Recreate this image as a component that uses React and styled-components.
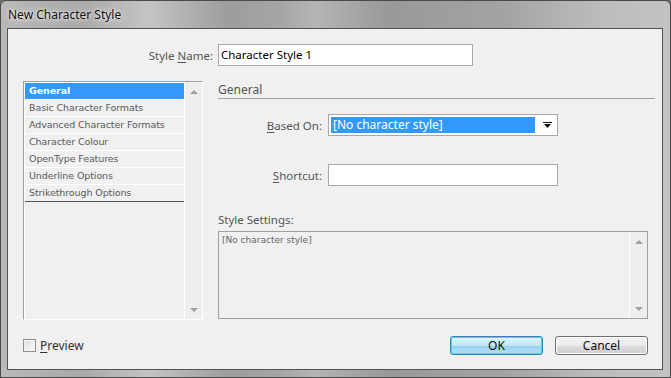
import React from 'react'
import styled, { createGlobalStyle } from 'styled-components'

const GlobalStyle = createGlobalStyle`
  html, body {
    margin: 0;
    padding: 0;
    background: #6d6d6d;
  }
  body {
    font-family: 'Segoe UI', 'Noto Sans', sans-serif;
  }
`

const items = [
  'General',
  'Basic Character Formats',
  'Advanced Character Formats',
  'Character Colour',
  'OpenType Features',
  'Underline Options',
  'Strikethrough Options',
]

export default function App() {
  return (
    <>
      <GlobalStyle />
      <Frame>
        <TitleBar>New Character Style</TitleBar>
        <Client>
          <NameRow>
            <Label width={205}>
              Style <u>N</u>ame:
            </Label>
            <TextField width={255}>Character Style 1</TextField>
          </NameRow>

          <Body>
            <ListBox>
              <ListItems>
                {items.map((name, i) => (
                  <ListItem key={name} selected={i === 0} last={i === items.length - 1}>
                    {name}
                  </ListItem>
                ))}
              </ListItems>
              <ScrollTrack>
                <Arrow />
                <Arrow down />
              </ScrollTrack>
            </ListBox>

            <Panel>
              <Heading>General</Heading>
              <FieldRow gap={15}>
                <Label width={104}>
                  <u>B</u>ased On:
                </Label>
                <Select>
                  <Selected>[No character style]</Selected>
                  <svg width="9" height="6" viewBox="0 0 9 6">
                    <rect x="0" y="0" width="9" height="1" fill="#111" />
                    <polygon points="1,2 8,2 4.5,6" fill="#111" />
                  </svg>
                </Select>
              </FieldRow>
              <FieldRow gap={28}>
                <Label width={104}>
                  <u>S</u>hortcut:
                </Label>
                <TextField width={230} />
              </FieldRow>

              <SettingsLabel>Style Settings:</SettingsLabel>
              <SettingsBox>
                <SettingsText>[No character style]</SettingsText>
                <ScrollTrack>
                  <Arrow />
                  <Arrow down />
                </ScrollTrack>
              </SettingsBox>
            </Panel>
          </Body>

          <Footer>
            <CheckLabel>
              <CheckBox />
              <span>
                <u>P</u>review
              </span>
            </CheckLabel>
            <Buttons>
              <Button primary>OK</Button>
              <Button>Cancel</Button>
            </Buttons>
          </Footer>
        </Client>
      </Frame>
    </>
  )
}

const Frame = styled.div`
  width: 671px;
  height: 378px;
  box-sizing: border-box;
  display: flex;
  flex-direction: column;
  border: 1px solid #4a4a4a;
  border-radius: 6px 6px 0 0;
  overflow: hidden;
  background: linear-gradient(
    90deg,
    #b9b9b9 0%,
    #a9a9a9 12%,
    #c4c4c4 22%,
    #9d9d9d 34%,
    #a6a6a6 42%,
    #b5b5b5 47%,
    #999 58%,
    #a3a3a3 75%,
    #bdbdbd 90%,
    #c2c2c2 100%
  );
`

const TitleBar = styled.div`
  height: 27px;
  display: flex;
  align-items: center;
  padding-left: 7px;
  font-size: 12px;
  color: #111;
  text-shadow: 0 0 6px rgba(255, 255, 255, 0.9), 0 0 3px rgba(255, 255, 255, 0.8);
`

const Client = styled.div`
  flex: 1;
  margin: 0 7px 7px 6px;
  border: 1px solid #555;
  background: #f0f0f0;
  display: flex;
  flex-direction: column;
  color: #555;
  font-size: 11.5px;
`

const NameRow = styled.div`
  display: flex;
  align-items: center;
  margin-top: 15px;
`

const Label = styled.div`
  width: ${(p) => p.width}px;
  margin-right: 5px;
  text-align: right;
  color: #555;
  white-space: nowrap;
  u {
    text-decoration-thickness: 1px;
    text-underline-offset: 2px;
  }
`

const TextField = styled.div`
  width: ${(p) => p.width}px;
  height: 22px;
  box-sizing: border-box;
  border: 1px solid #a8a8a8;
  background: #fff;
  color: #000;
  padding: 2px 2px 0;
  font-size: 11.5px;
  line-height: 16px;
`

const Body = styled.div`
  display: flex;
  margin-top: 15px;
  padding: 0 14px 0 15px;
`

const ListBox = styled.div`
  width: 180px;
  height: 239px;
  box-sizing: border-box;
  border: 1px solid #a0a0a0;
  border-right-color: #fff;
  border-bottom-color: #fff;
  box-shadow: inset 1px 1px 0 #fff;
  display: flex;
`

const ListItems = styled.div`
  flex: 1;
  padding: 1px 0 0 1px;
`

const ListItem = styled.div`
  height: 16px;
  line-height: 16px;
  padding-left: 4px;
  font-family: 'DejaVu Sans', sans-serif;
  font-size: 9.5px;
  letter-spacing: -0.1px;
  color: ${(p) => (p.selected ? '#fff' : '#5a5a5a')};
  font-weight: ${(p) => (p.selected ? 700 : 400)};
  background: ${(p) => (p.selected ? '#3399ff' : 'transparent')};
  border-bottom: 1px solid ${(p) => (p.last ? '#555' : '#fff')};
`

const ScrollTrack = styled.div`
  width: 17px;
  border-left: 1px solid #fff;
  background: #eeeeee;
  display: flex;
  flex-direction: column;
  justify-content: space-between;
  align-items: center;
  padding: 8px 0 7px;
`

const Arrow = styled.div`
  width: 0;
  height: 0;
  border-left: 4px solid transparent;
  border-right: 4px solid transparent;
  ${(p) =>
    p.down
      ? 'border-top: 4px solid #a0a0a0;'
      : 'border-bottom: 4px solid #a0a0a0;'}
`

const Panel = styled.div`
  flex: 1;
  margin-left: 15px;
  display: flex;
  flex-direction: column;
`

const Heading = styled.div`
  height: 17px;
  margin-right: -7px;
  line-height: 17px;
  border-bottom: 1px solid #a0a0a0;
  color: #555;
  font-size: 12px;
`

const FieldRow = styled.div`
  display: flex;
  align-items: center;
  margin-top: ${(p) => p.gap}px;
  ${Label} {
    margin-right: 6px;
  }
`

const Select = styled.div`
  width: 230px;
  height: 22px;
  box-sizing: border-box;
  border: 1px solid #a8a8a8;
  background: #fff;
  display: flex;
  align-items: center;
  padding: 2px 5px 2px 2px;
  gap: 8px;
`

const Selected = styled.div`
  flex: 1;
  height: 16px;
  background: #3399ff;
  color: #fff;
  font-size: 12px;
  line-height: 16px;
  padding-left: 2px;
`

const SettingsLabel = styled.div`
  margin-top: 26px;
  height: 16px;
  line-height: 16px;
  color: #555;
`

const SettingsBox = styled.div`
  margin-top: 3px;
  height: 88px;
  box-sizing: border-box;
  border: 1px solid #a0a0a0;
  display: flex;
`

const SettingsText = styled.div`
  flex: 1;
  padding: 3px 3px;
  font-family: 'DejaVu Sans', sans-serif;
  font-size: 9px;
  color: #666;
`

const Footer = styled.div`
  display: flex;
  align-items: center;
  justify-content: space-between;
  margin-top: 16px;
  padding: 0 14px 0 15px;
`

const CheckLabel = styled.div`
  display: flex;
  align-items: center;
  gap: 4px;
  color: #333;
  font-size: 12px;
  u {
    text-underline-offset: 2px;
  }
`

const CheckBox = styled.div`
  width: 13px;
  height: 13px;
  box-sizing: border-box;
  border: 1px solid #8e8f8f;
  background: linear-gradient(135deg, #dcdcdc 0%, #f4f4f4 70%, #fff 100%);
  box-shadow: inset 0 0 0 1px #f4f4f4;
`

const Buttons = styled.div`
  display: flex;
  gap: 12px;
`

const Button = styled.div`
  width: 93px;
  height: 19px;
  box-sizing: border-box;
  border-radius: 3px;
  border: 1px solid ${(p) => (p.primary ? '#3c7fb1' : '#707070')};
  background: ${(p) =>
    p.primary
      ? 'linear-gradient(#e5f4fc 0%, #c4e5f6 50%, #98d1ef 51%, #b3e0f9 100%)'
      : 'linear-gradient(#f2f2f2 0%, #ebebeb 50%, #dddddd 51%, #cfcfcf 100%)'};
  box-shadow: ${(p) =>
    p.primary ? 'inset 0 0 0 1px #48d4f6' : 'inset 0 0 0 1px #fcfcfc'};
  display: flex;
  align-items: center;
  justify-content: center;
  color: #111;
  font-size: 12px;
`
